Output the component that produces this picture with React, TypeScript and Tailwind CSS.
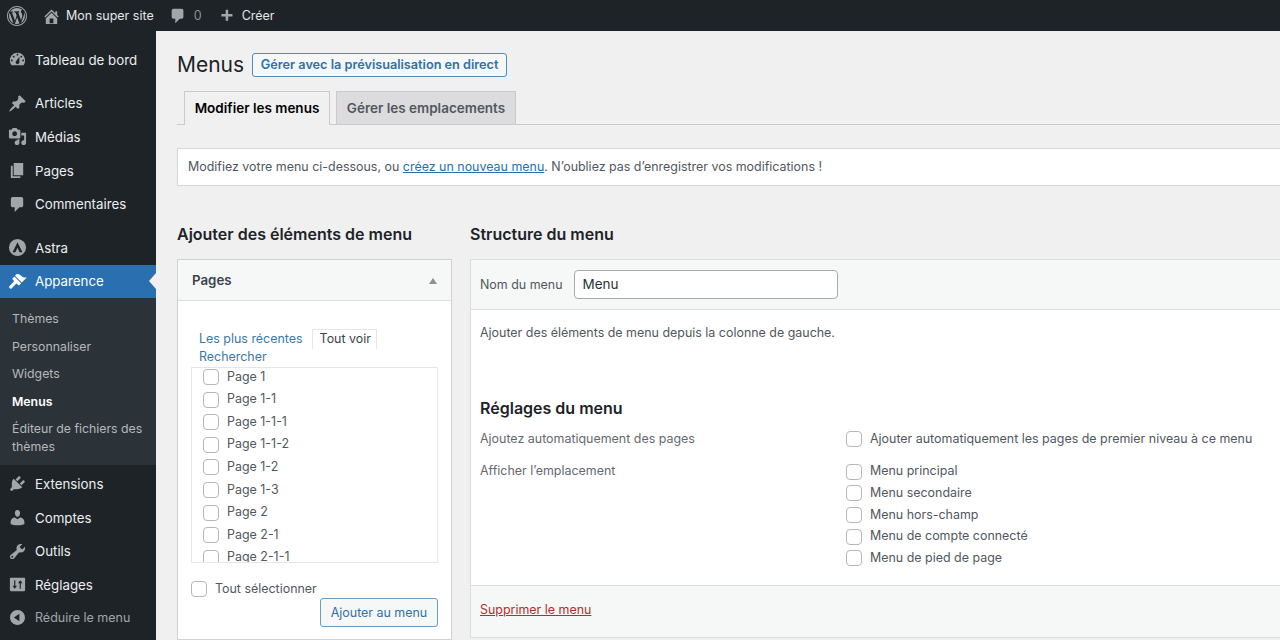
import type { ReactNode } from "react";

const FONT = "font-['Inter','Liberation_Sans',sans-serif]";

const ICONS: Record<string, string> = {
  wp: "M20 10c0-5.52-4.48-10-10-10S0 4.48 0 10s4.48 10 10 10 10-4.48 10-10zM10 1.01c4.97 0 8.99 4.02 8.99 8.99s-4.02 8.99-8.99 8.99S1.01 14.97 1.01 10 5.03 1.01 10 1.01zM8.01 14.82L4.96 6.61c.49-.03 1.05-.08 1.05-.08.43-.05.38-1.01-.06-.99 0 0-1.29.1-2.13.1-.15 0-.33 0-.52-.01 1.44-2.17 3.9-3.6 6.7-3.6 2.09 0 3.99.79 5.41 2.09-.6-.08-1.45.35-1.45 1.42 0 .66.38 1.22.79 1.88.31.54.5 1.22.5 2.21 0 1.34-1.27 4.48-1.27 4.48l-2.71-7.5c.48-.03.75-.16.75-.16.43-.05.38-1.1-.05-1.08 0 0-1.3.11-2.14.11-.78 0-2.11-.11-2.11-.11-.43-.02-.48 1.06-.05 1.08l.84.08 1.12 3.04zm6.02 2.15L16.64 10s.67-1.69.39-3.81c.63 1.14.94 2.42.94 3.81 0 2.96-1.56 5.58-3.94 6.97zM2.68 6.77L6.5 17.25c-2.67-1.3-4.47-4.08-4.47-7.25 0-1.16.2-2.23.65-3.23zm7.45 4.53l2.29 6.25c-.75.27-1.57.42-2.42.42-.72 0-1.41-.11-2.06-.3z",
  home: "M16 8.5l1.53 1.53-1.06 1.06L10 4.62l-6.47 6.47-1.06-1.06L10 2.5l4 4v-2h2v4zm-6-2.46l6 5.99V18H4v-5.97zM12 17v-5H8v5h4z",
  comment: "M5 2h9c1.1 0 2 .9 2 2v7c0 1.1-.9 2-2 2h-2l-5 5v-5H5c-1.1 0-2-.9-2-2V4c0-1.1.9-2 2-2z",
  plus: "M17 7v3h-5v5H9v-5H4V7h5V2h3v5h5z",
  dashboard: "M3.76 16h12.48c1.1-1.37 1.76-3.11 1.76-5 0-4.42-3.58-8-8-8s-8 3.58-8 8c0 1.89.66 3.63 1.76 5zM10 4c.55 0 1 .45 1 1s-.45 1-1 1-1-.45-1-1 .45-1 1-1zM6 6c.55 0 1 .45 1 1s-.45 1-1 1-1-.45-1-1 .45-1 1-1zm8 0c.55 0 1 .45 1 1s-.45 1-1 1-1-.45-1-1 .45-1 1-1zm-5.37 5.55L12 7v6c0 1.1-.9 2-2 2s-2-.9-2-2c0-.57.24-1.08.63-1.45zM4 10c.55 0 1 .45 1 1s-.45 1-1 1-1-.45-1-1 .45-1 1-1zm12 0c.55 0 1 .45 1 1s-.45 1-1 1-1-.45-1-1 .45-1 1-1z",
  pin: "M10.44 3.02l1.82-1.82 6.36 6.35-1.83 1.82c-1.05-.68-2.48-.57-3.41.36l-.75.75c-.92.93-1.04 2.35-.35 3.41l-1.83 1.82-2.41-2.41-2.8 2.79c-.42.42-3.38 2.71-3.8 2.29s1.86-3.39 2.28-3.81l2.79-2.79L4.1 9.36l1.83-1.82c1.05.69 2.48.57 3.4-.36l.75-.75c.93-.92 1.05-2.35.36-3.41z",
  media: "M13 11V4c0-.55-.45-1-1-1h-1.67L9 1H5L3.67 3H2c-.55 0-1 .45-1 1v7c0 .55.45 1 1 1h10c.55 0 1-.45 1-1zM7 4.5c1.38 0 2.5 1.12 2.5 2.5S8.38 9.5 7 9.5 4.5 8.38 4.5 7 5.62 4.5 7 4.5zM14 6h5v10.5c0 1.38-1.12 2.5-2.5 2.5S14 17.88 14 16.5s1.12-2.5 2.5-2.5c.17 0 .34.02.5.05V9h-3V6zm-4 8.05V13h2v3.5c0 1.38-1.12 2.5-2.5 2.5S7 17.88 7 16.5 8.12 14 9.5 14c.17 0 .34.02.5.05z",
  page: "M6 15V2h10v13H6zm-1 1h8v2H3V5h2v11z",
  brush: "M14.48 11.06L7.41 3.99l1.5-1.5c.5-.56 2.3-.47 3.51.32 1.21.8 1.43 1.28 2.91 2.1 1.18.64 2.45 1.26 4.45.85zm-.71.71L6.7 4.7 4.93 6.47c-.39.39-.39 1.02 0 1.41l1.06 1.06c.39.39.39 1.02 0 1.41l-4.6 4.6c-.4.4-.4 1 0 1.4l.9.9c.4.4 1 .4 1.4 0l4.6-4.6c.39-.39 1.02-.39 1.41 0l1.06 1.06c.39.39 1.02.39 1.41 0z",
  plugin: "M13.11 4.36L9.87 7.6 8 5.73l3.24-3.24c.35-.34 1.05-.2 1.56.32.52.51.66 1.21.31 1.55zm-8 1.77l.91-1.12 9.01 9.01-1.19.84c-.71.71-2.63 1.16-3.82 1.16H6.14L4.9 17.26c-.59.59-1.54.59-2.12 0-.59-.58-.59-1.53 0-2.12l1.24-1.24v-3.88c0-1.13.4-3.19 1.09-3.89zm7.26 3.97l3.24-3.24c.34-.35 1.04-.21 1.55.31.52.51.66 1.21.31 1.55l-3.24 3.25z",
  user: "M10 9.25c-2.27 0-2.73-3.44-2.73-3.44C7 4.02 7.82 2 9.97 2c2.16 0 2.98 2.02 2.71 3.81 0 0-.41 3.44-2.68 3.44zm0 2.57L12.72 10c2.39 0 4.52 2.33 4.52 4.53v2.49s-3.65 1.13-7.24 1.13c-3.65 0-7.24-1.13-7.24-1.13v-2.49c0-2.25 1.94-4.48 4.47-4.48z",
  tools: "M16.68 9.77c-1.34 1.34-3.3 1.67-4.95.99l-5.41 6.52c-.99.99-2.59.99-3.58 0s-.99-2.59 0-3.57l6.52-5.42c-.68-1.65-.35-3.61.99-4.95 1.28-1.28 3.12-1.62 4.72-1.06l-2.89 2.89 2.82 2.82 2.86-2.87c.53 1.58.18 3.39-1.08 4.65zM3.81 16.21c.4.39 1.04.39 1.43 0 .4-.4.4-1.04 0-1.43-.39-.4-1.03-.4-1.43 0-.39.39-.39 1.03 0 1.43z",
  settings: "M18 16V4c0-.55-.45-1-1-1H3c-.55 0-1 .45-1 1v12c0 .55.45 1 1 1h14c.55 0 1-.45 1-1zM6.5 5.5h1.2v5.8h1.8L7.1 14.6 4.7 11.3h1.8zM12.3 14.5V8.7h-1.8l2.4-3.3 2.4 3.3h-1.8v5.8z",
  collapse: "M10 2.16c4.33 0 7.84 3.51 7.84 7.84s-3.51 7.84-7.84 7.84S2.16 14.33 2.16 10 5.71 2.16 10 2.16zm2 11.72V6.12L6.18 9.97z",
  astra: "M10 1a9 9 0 1 0 0 18 9 9 0 0 0 0-18zM10 4.5l5.2 10.5h-3L10 10.2 7.8 15h-3z",
};

function Dash({ name, className }: { name: string; className: string }) {
  return (
    <svg viewBox="0 0 20 20" className={className} fill="currentColor" fillRule="evenodd">
      <path d={ICONS[name]} />
    </svg>
  );
}

function MenuItem({ icon, label, active }: { icon: string; label: string; active?: boolean }) {
  return (
    <div className={`relative flex h-[33.6px] items-center pl-[8px] ${active ? "bg-[#2a70b0] text-white" : "text-[#eceeef]"}`}>
      <Dash name={icon} className={`w-[19px] h-[19px] ${active ? "text-white" : "text-[#a2a6aa]"}`} />
      <span className="ml-[8px] mt-[2px] text-[13.3px]">{label}</span>
      {active && (
        <span className="absolute right-0 top-1/2 -translate-y-1/2 border-y-[8px] border-r-[7px] border-y-transparent border-r-[#f0f0f1]" />
      )}
    </div>
  );
}

function SubItem({ children, current }: { children: ReactNode; current?: boolean }) {
  return (
    <div className={`pl-[12px] pr-[8px] py-[5px] text-[12.3px] leading-[17.5px] ${current ? "font-semibold text-white" : "text-[#b5b9bc]"}`}>
      {children}
    </div>
  );
}

function Check({ label, className = "" }: { label: string; className?: string }) {
  return (
    <div className={`flex items-center gap-[8px] text-[12.45px] text-[#50575e] ${className}`}>
      <span className="w-[16px] h-[16px] shrink-0 rounded-[4px] border border-[#b4b7bb] bg-white" />
      <span>{label}</span>
    </div>
  );
}

const PAGES = ["Page 1", "Page 1-1", "Page 1-1-1", "Page 1-1-2", "Page 1-2", "Page 1-3", "Page 2", "Page 2-1", "Page 2-1-1"];
const LOCATIONS = ["Menu principal", "Menu secondaire", "Menu hors-champ", "Menu de compte connecté", "Menu de pied de page"];

function App() {
  return (
    <div className={`${FONT} flex h-[640px] w-[1280px] flex-col overflow-hidden bg-[#f0f0f1] text-[#1d2327]`}>
      {/* admin bar */}
      <div className="flex h-[31px] shrink-0 items-center bg-[#1d2327] pl-[7px] pt-[1px] text-[12.5px] text-[#e4e6e7]">
        <Dash name="wp" className="w-[20px] h-[20px] text-[#a2a6aa]" />
        <Dash name="home" className="ml-[15px] w-[19px] h-[19px] text-[#a2a6aa]" />
        <span className="ml-[5px]">Mon super site</span>
        <Dash name="comment" className="ml-[15px] w-[18px] h-[18px] text-[#a2a6aa]" />
        <span className="ml-[7px] text-[#8c9094]">0</span>
        <Dash name="plus" className="ml-[16px] w-[17px] h-[17px] text-[#a2a6aa]" />
        <span className="ml-[7px]">Créer</span>
      </div>

      <div className="flex min-h-0 flex-1">
        {/* sidebar */}
        <aside className="flex w-[156px] shrink-0 flex-col bg-[#1d2327] pt-[12px]">
          <MenuItem icon="dashboard" label="Tableau de bord" />
          <div className="h-[10px]" />
          <MenuItem icon="pin" label="Articles" />
          <MenuItem icon="media" label="Médias" />
          <MenuItem icon="page" label="Pages" />
          <MenuItem icon="comment" label="Commentaires" />
          <div className="h-[10px]" />
          <MenuItem icon="astra" label="Astra" />
          <MenuItem icon="brush" label="Apparence" active />
          <div className="bg-[#2c3338] pb-[5px] pt-[7px]">
            <SubItem>Thèmes</SubItem>
            <SubItem>Personnaliser</SubItem>
            <SubItem>Widgets</SubItem>
            <SubItem current>Menus</SubItem>
            <SubItem>Éditeur de fichiers des thèmes</SubItem>
          </div>
          <div className="h-[2px]" />
          <MenuItem icon="plugin" label="Extensions" />
          <MenuItem icon="user" label="Comptes" />
          <MenuItem icon="tools" label="Outils" />
          <MenuItem icon="settings" label="Réglages" />
          <div className="flex h-[31px] items-center pl-[8px] text-[12.5px] text-[#a2a6aa]">
            <Dash name="collapse" className="w-[19px] h-[19px]" />
            <span className="ml-[8px] mt-[2px]">Réduire le menu</span>
          </div>
        </aside>

        {/* content */}
        <main className="min-w-0 flex-1 overflow-hidden pl-[21px]">
          <div className="flex h-[60px] items-center pt-[7px]">
            <h1 className="text-[21px] text-[#1d2327]">Menus</h1>
            <span className="ml-[8px] flex h-[24px] w-[255px] items-center justify-center rounded-[3px] border border-[#4f8dbd] bg-[#f6f7f7] text-[12.7px] font-semibold text-[#2d72ae]">
              Gérer avec la prévisualisation en direct
            </span>
          </div>

          <div className="flex h-[34px] items-end gap-[6px] border-b border-[#c9cacc] pl-[7px]">
            <div className="-mb-px flex h-[34px] w-[146px] items-center justify-center border border-b-0 border-[#c9cacc] bg-[#f0f0f1] text-[13.5px] font-semibold text-black">
              Modifier les menus
            </div>
            <div className="-mb-px flex h-[34px] w-[180px] items-center justify-center border border-[#c9cacc] bg-[#dcdcde] text-[13.5px] font-semibold text-[#50575e]">
              Gérer les emplacements
            </div>
          </div>

          <div className="mt-[23px] flex h-[38px] w-[1120px] items-center border border-[#d5d6d8] bg-white pl-[10px] pt-[1px] text-[12.45px] text-[#50575e]">
            Modifiez votre menu ci-dessous, ou&nbsp;
            <span className="text-[#2271b1] underline">créez un nouveau menu</span>. N’oubliez pas d’enregistrer vos modifications !
          </div>

          <div className="mt-[34px] flex gap-[18px]">
            {/* left column */}
            <div className="w-[275px] shrink-0">
              <h2 className="h-[39px] text-[16px] font-semibold leading-[28px] text-[#1d2327]">Ajouter des éléments de menu</h2>
              <div className="border border-[#d0d1d3] bg-white">
                <div className="flex h-[41px] items-center justify-between border-b border-[#dcdcde] bg-[#f6f7f7] pl-[14px] pr-[14px] pt-[1px]">
                  <span className="text-[13.3px] font-semibold text-[#3c434a]">Pages</span>
                  <span className="border-x-[4px] border-b-[6px] border-x-transparent border-b-[#8c8f94]" />
                </div>
                <div className="pb-[12px] pl-[13px] pr-[13px] pt-[28px]">
                  <div className="flex items-end pl-[8px] text-[12.45px]">
                    <span className="text-[#3a77a8]">Les plus récentes</span>
                    <span className="ml-[9px] border border-b-0 border-[#e6e6e7] pl-[7px] pr-[5px] text-[#3c434a]">Tout voir</span>
                  </div>
                  <div className="pl-[8px] text-[12.45px] leading-[16px] text-[#3a77a8]">Rechercher</div>
                  <div className="mt-[2px] h-[196px] overflow-hidden border border-[#e6e6e7] pl-[11px]">
                    <div className="-mt-[2px] flex flex-col">
                      {PAGES.map((p) => (
                        <Check key={p} label={p} className="h-[22.6px] gap-[5px]" />
                      ))}
                    </div>
                  </div>
                  <Check label="Tout sélectionner" className="mt-[17px] gap-[6px]" />
                  <div className="flex justify-end">
                    <span className="flex h-[29px] w-[118px] items-center justify-center rounded-[3px] border border-[#6d9abd] bg-[#f6f7f7] text-[12.45px] text-[#2f71a8]">
                      Ajouter au menu
                    </span>
                  </div>
                </div>
              </div>
            </div>

            {/* right column */}
            <div className="w-[830px] shrink-0">
              <h2 className="h-[39px] text-[16px] font-semibold leading-[28px] text-[#1d2327]">Structure du menu</h2>
              <div className="border border-[#dcdcde] bg-white">
                <div className="flex h-[50px] items-center border-b border-[#dcdcde] bg-[#f6f7f7] pl-[9px]">
                  <span className="mt-[2px] text-[12.45px] text-[#50575e]">Nom du menu</span>
                  <span className="ml-[11px] flex h-[29px] w-[264px] items-center rounded-[4px] border border-[#a7aaad] bg-white pl-[8px] text-[13.5px] text-[#2c3338]">
                    Menu
                  </span>
                </div>
                <div className="pl-[9px] pt-[14px] text-[12.45px] text-[#50575e]">
                  <p>Ajouter des éléments de menu depuis la colonne de gauche.</p>
                  <h3 className="mt-[53px] text-[16px] font-semibold text-[#1d2327]">Réglages du menu</h3>
                  <div className="mt-[10px] flex items-center">
                    <span className="w-[366px] text-[#646970]">Ajoutez automatiquement des pages</span>
                    <Check label="Ajouter automatiquement les pages de premier niveau à ce menu" />
                  </div>
                  <div className="mt-[14px] flex pb-[17px]">
                    <span className="w-[366px] text-[#646970]">Afficher l’emplacement</span>
                    <div className="flex flex-col gap-[3px]">
                      {LOCATIONS.map((l) => (
                        <Check key={l} label={l} />
                      ))}
                    </div>
                  </div>
                </div>
                <div className="flex h-[52px] items-center border-t border-[#dcdcde] bg-[#f6f7f7] pb-[2px] pl-[9px] text-[12.45px] text-[#b32d2e] underline">
                  Supprimer le menu
                </div>
              </div>
            </div>
          </div>
        </main>
      </div>
    </div>
  );
}

export default App;
